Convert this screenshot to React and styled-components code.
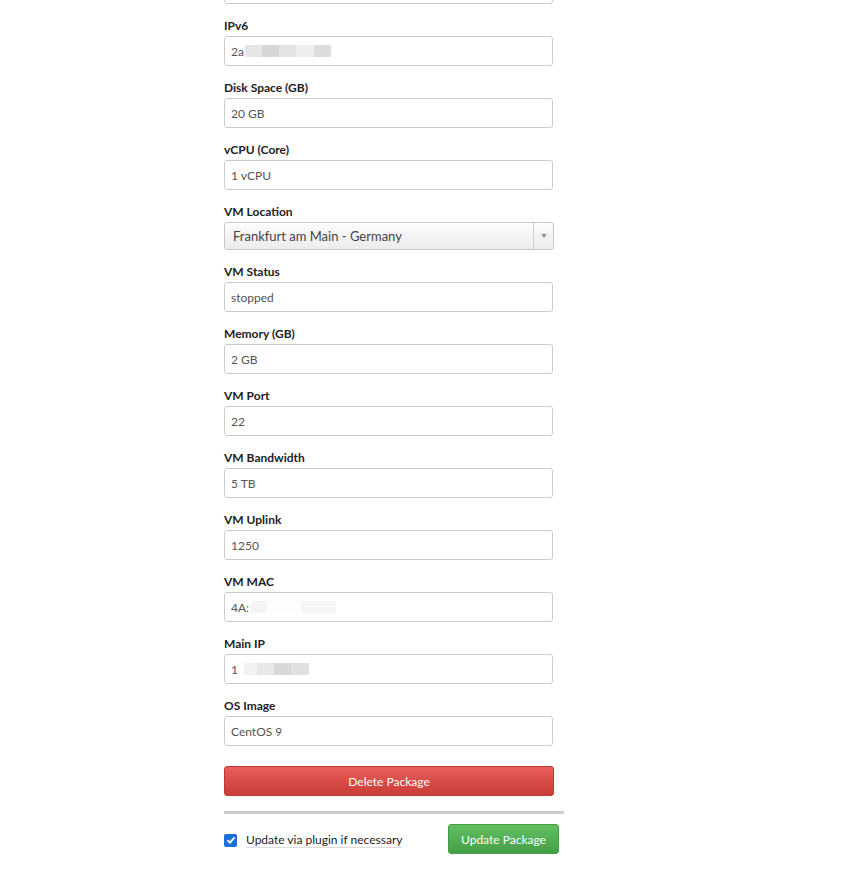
import React from 'react'
import styled, { createGlobalStyle } from 'styled-components'

const GlobalStyle = createGlobalStyle`
  html, body {
    margin: 0;
    padding: 0;
    background: #fff;
    overflow: hidden;
  }
  body {
    font-family: Lato, "Open Sans", "Liberation Sans", sans-serif;
    color: #333;
  }
`

const Page = styled.div`
  width: 868px;
  height: 875px;
  overflow: hidden;
`

const Column = styled.div`
  width: 340px;
  margin: -26px 0 0 224px;
  display: flex;
  flex-direction: column;
`

const Field = styled.div`
  width: 329px;
  display: flex;
  flex-direction: column;
  margin-bottom: 15px;
`

const Label = styled.label`
  font-size: 12px;
  font-weight: 700;
  line-height: 14px;
  color: #222;
  margin-bottom: 3px;
`

const Input = styled.div`
  box-sizing: border-box;
  height: 30px;
  border: 1px solid #ccc;
  border-radius: 3px;
  padding: 0 6px;
  display: flex;
  align-items: center;
  font-size: 12px;
  color: #555;
  background: #fff;
`

const Blur = styled.span`
  display: inline-block;
  width: ${p => p.w}px;
  height: 12px;
  background: ${p => p.c};
`

const Select = styled.div`
  box-sizing: border-box;
  height: 28px;
  width: 330px;
  border: 1px solid #c8c8c8;
  border-radius: 3px;
  display: flex;
  align-items: stretch;
  background: linear-gradient(#fcfcfc, #ececec);
  font-size: 13px;
  color: #444;
`

const SelectText = styled.span`
  flex: 1;
  display: flex;
  align-items: center;
  padding-left: 8px;
`

const Arrow = styled.span`
  width: 19px;
  border-left: 1px solid #cfcfcf;
  display: flex;
  align-items: center;
  justify-content: center;
  &::after {
    content: '';
    border-left: 3px solid transparent;
    border-right: 3px solid transparent;
    border-top: 4px solid #999;
  }
`

const Button = styled.button`
  box-sizing: border-box;
  height: 30px;
  border-radius: 3px;
  font-family: inherit;
  font-size: 12px;
  color: #fff;
  cursor: pointer;
  border: 1px solid ${p => (p.danger ? '#b83a36' : '#449d44')};
  background: ${p =>
    p.danger
      ? 'linear-gradient(#e95f5b, #c93b37)'
      : 'linear-gradient(#62bf62, #45a045)'};
`

const DeleteButton = styled(Button)`
  width: 330px;
  margin-top: 5px;
`

const Separator = styled.hr`
  width: 340px;
  height: 3px;
  border: 0;
  background: #ccc;
  margin: 15px 0 10px;
`

const Footer = styled.div`
  display: flex;
  align-items: center;
  width: 335px;
  justify-content: space-between;
`

const Check = styled.label`
  display: flex;
  align-items: center;
  gap: 9px;
  font-size: 12px;
  color: #222;
  margin-top: 2px;
`

const Box = styled.span`
  width: 13px;
  height: 13px;
  border-radius: 2px;
  background: #1a6fd8;
  display: flex;
  align-items: center;
  justify-content: center;
`

const CheckText = styled.span`
  border-bottom: 1px solid #ddd;
  line-height: 15px;
`

const UpdateButton = styled(Button)`
  width: 111px;
`

const blurs = {
  ipv6: [
    [17, '#e6e6e6'],
    [17, '#d6d6d6'],
    [17, '#e3e3e3'],
    [18, '#eeeeee'],
    [17, '#dcdcdc'],
  ],
  mac: [
    [16, '#f5f5f5'],
    [34, '#fdfdfd'],
    [35, '#f6f6f6'],
  ],
  ip: [
    [13, '#f2f2f2'],
    [17, '#e8e8e8'],
    [17, '#d8d8d8'],
    [18, '#e0e0e0'],
  ],
}

const fields = [
  { label: 'IPv4', value: '' },
  { label: 'IPv6', value: '2a', blur: blurs.ipv6, gap: 1 },
  { label: 'Disk Space (GB)', value: '20 GB' },
  { label: 'vCPU (Core)', value: '1 vCPU' },
  { label: 'VM Location', select: 'Frankfurt am Main - Germany' },
  { label: 'VM Status', value: 'stopped' },
  { label: 'Memory (GB)', value: '2 GB' },
  { label: 'VM Port', value: '22' },
  { label: 'VM Bandwidth', value: '5 TB' },
  { label: 'VM Uplink', value: '1250' },
  { label: 'VM MAC', value: '4A:', blur: blurs.mac, gap: 2 },
  { label: 'Main IP', value: '1', blur: blurs.ip, gap: 6 },
  { label: 'OS Image', value: 'CentOS 9' },
]

export default function App() {
  return (
    <Page>
      <GlobalStyle />
      <Column>
        {fields.map((f, i) => (
          <Field key={f.label}>
            {i > 0 && <Label>{f.label}</Label>}
            {f.select ? (
              <Select>
                <SelectText>{f.select}</SelectText>
                <Arrow />
              </Select>
            ) : (
              <Input>
                {f.value}
                {f.blur && <span style={{ width: f.gap }} />}
                {f.blur && f.blur.map(([w, c], j) => <Blur key={j} w={w} c={c} />)}
              </Input>
            )}
          </Field>
        ))}
        <DeleteButton danger>Delete Package</DeleteButton>
        <Separator />
        <Footer>
          <Check>
            <Box>
              <svg width="10" height="10" viewBox="0 0 10 10">
                <path d="M1.5 5.2 L4 7.6 L8.6 2.4" stroke="#fff" strokeWidth="1.8" fill="none" />
              </svg>
            </Box>
            <CheckText>Update via plugin if necessary</CheckText>
          </Check>
          <UpdateButton>Update Package</UpdateButton>
        </Footer>
      </Column>
    </Page>
  )
}
